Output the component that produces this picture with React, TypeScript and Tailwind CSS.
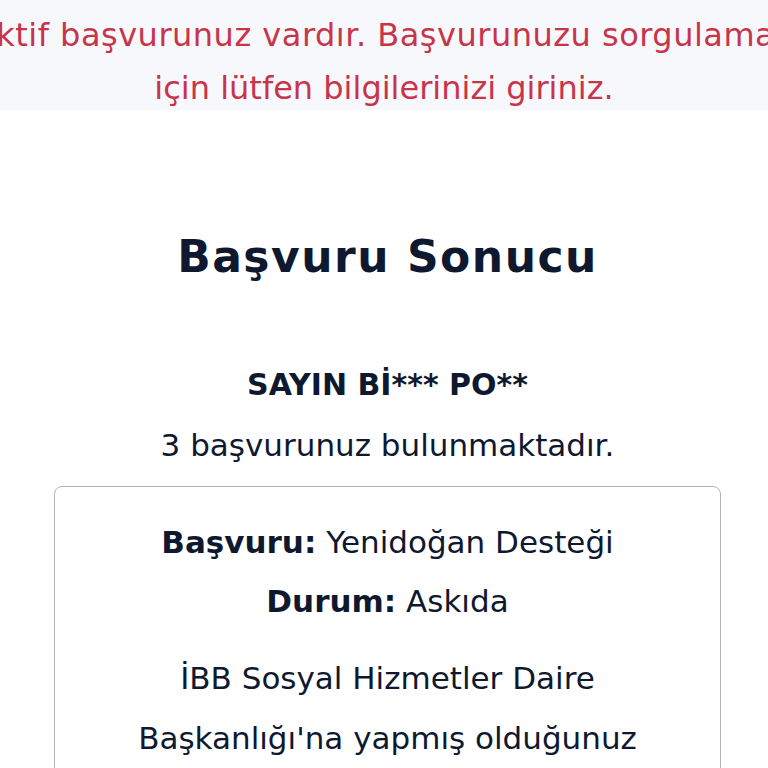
export default function App() {
  return (
    <div
      className="min-h-screen w-full overflow-hidden bg-white text-[#0e1930]"
      style={{ fontFamily: '"DejaVu Sans", "Noto Sans", sans-serif' }}
    >
      {/* Notice banner */}
      <div className="h-[110px] w-full overflow-hidden bg-[#f7f8fb] pt-[9px] text-center text-[32px] leading-[53px] text-[#c8354b]">
        <div className="flex justify-center">
          <span className="whitespace-nowrap tracking-[0.5px]">Aktif başvurunuz vardır. Başvurunuzu sorgulamak</span>
        </div>
        <div className="whitespace-nowrap">için lütfen bilgilerinizi giriniz.</div>
      </div>

      <main className="flex flex-col items-center pl-[54px] pr-[47px]">
        <h1 className="mt-[119px] text-[44px] font-bold leading-[56px] tracking-[1.5px]">Başvuru Sonucu</h1>

        <p className="mt-[80px] text-[30px] font-bold leading-[40px]">SAYIN Bİ*** PO**</p>
        <p className="mt-[20px] text-[31px] leading-[40px]">3 başvurunuz bulunmaktadır.</p>

        <div className="mt-[21px] w-full rounded-lg border border-[#b3b3b3] px-8 pt-[35px] pb-10 text-center text-[31px]">
          <p className="leading-[40px]">
            <span className="font-bold">Başvuru:</span> Yenidoğan Desteği
          </p>
          <p className="mt-[19px] leading-[40px]">
            <span className="font-bold">Durum:</span> Askıda
          </p>
          <p className="mt-[27px] leading-[60px]">
            İBB Sosyal Hizmetler Daire
            <br />
            Başkanlığı'na yapmış olduğunuz
            <br />
            başvurunuz incelenmektedir.
          </p>
        </div>
      </main>
    </div>
  );
}
